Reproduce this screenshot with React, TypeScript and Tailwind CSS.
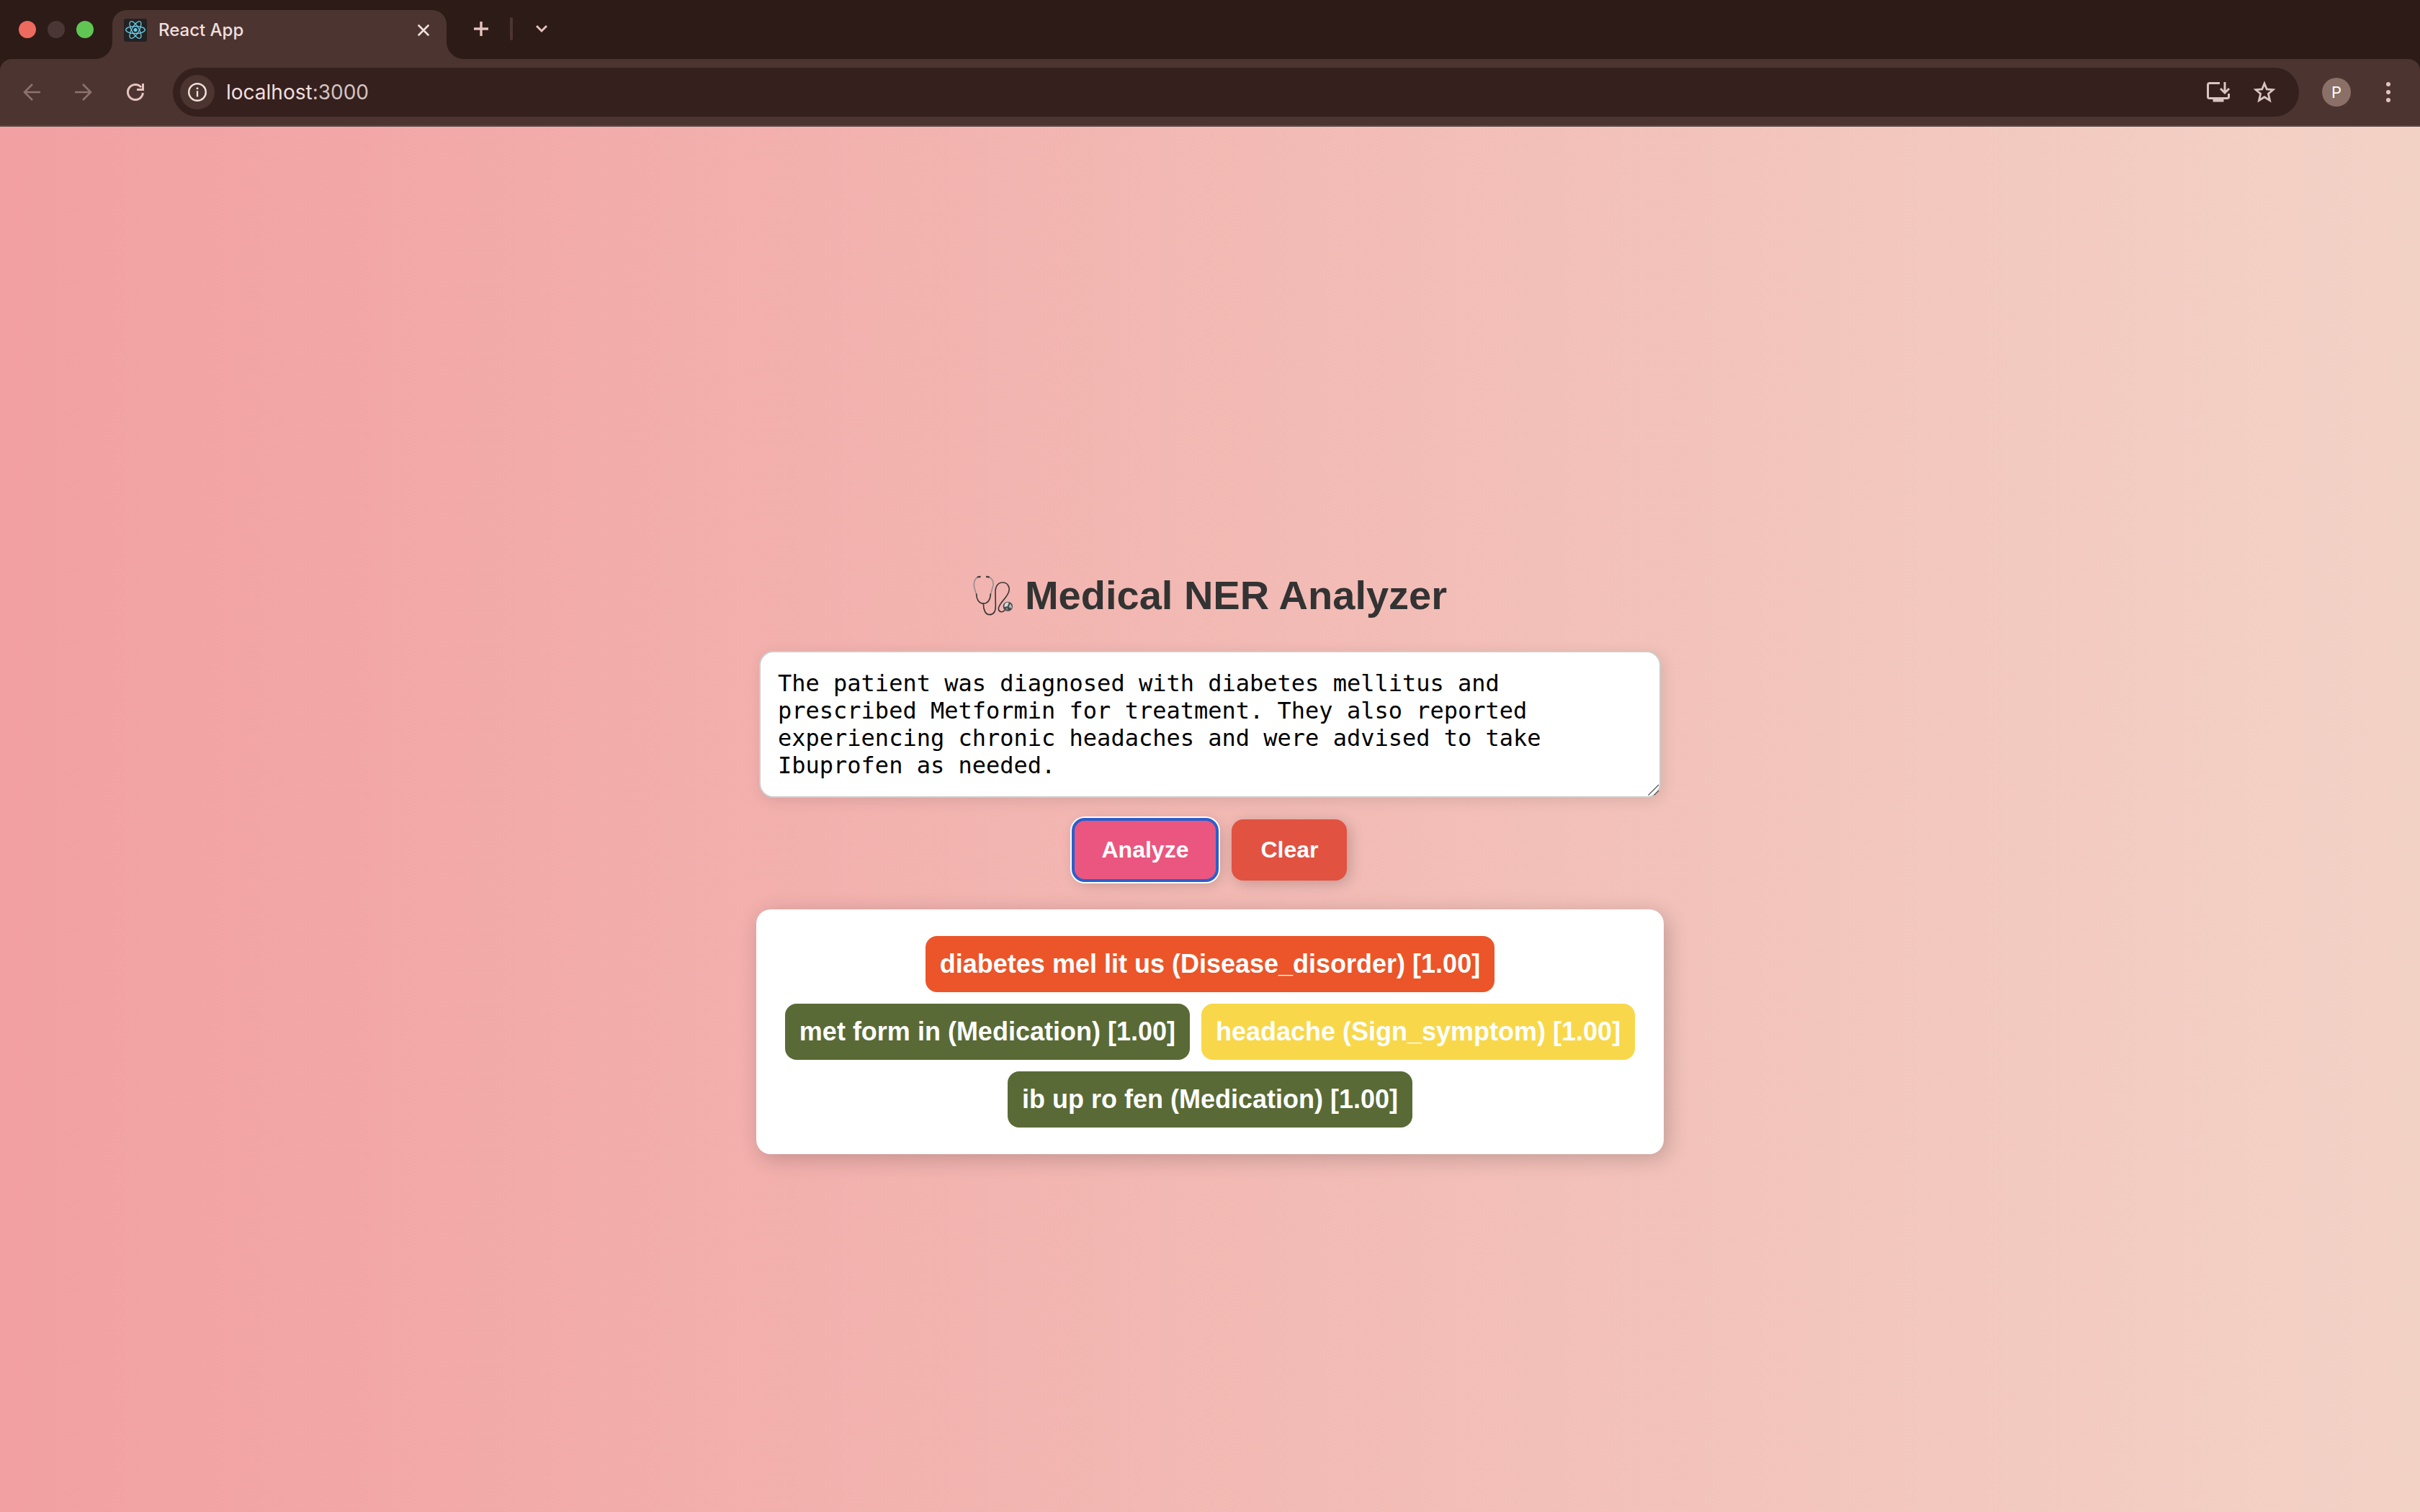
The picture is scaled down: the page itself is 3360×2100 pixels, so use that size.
import { useState } from "react";

const SAMPLE_TEXT =
  "The patient was diagnosed with diabetes mellitus and prescribed Metformin for treatment. They also reported experiencing chronic headaches and were advised to take Ibuprofen as needed.";

const ENTITIES = [
  { word: "diabetes mel lit us", group: "Disease_disorder", score: "1.00", color: "bg-[#eb5529]" },
  { word: "met form in", group: "Medication", score: "1.00", color: "bg-[#596a36]" },
  { word: "headache", group: "Sign_symptom", score: "1.00", color: "bg-[#f8d84a]" },
  { word: "ib up ro fen", group: "Medication", score: "1.00", color: "bg-[#596a36]" },
];

function ReactLogo() {
  return (
    <svg className="size-8 shrink-0" viewBox="0 0 32 32" fill="none" aria-hidden="true">
      <rect width="32" height="32" rx="3" fill="#222222" />
      <g stroke="#6fcbe6" strokeWidth="1.3">
        <ellipse cx="16" cy="15.5" rx="13.3" ry="5" />
        <ellipse cx="16" cy="15.5" rx="13.3" ry="5" transform="rotate(60 16 15.5)" />
        <ellipse cx="16" cy="15.5" rx="13.3" ry="5" transform="rotate(120 16 15.5)" />
      </g>
      <circle cx="16" cy="15.5" r="2.5" fill="#6fcbe6" />
    </svg>
  );
}

function Stethoscope() {
  return (
    <svg className="size-14 shrink-0" viewBox="64 52 168 168" fill="none" strokeLinecap="round" aria-hidden="true">
      <g stroke="#9a8c93" strokeWidth="5">
        <path d="M84 60C68 66 64 92 72 112L78 132" />
        <path d="M130 60C148 66 152 86 145 104L137 132" />
      </g>
      <g stroke="#4a3f40" strokeWidth="7">
        <path d="M84 59L93 58" />
        <path d="M121 58L130 59" />
      </g>
      <g stroke="#3f3a39" strokeWidth="5">
        <path d="M78 130C78 152 88 169 107 170C127 169 136 152 137 130" />
        <path d="M107 170C107 196 116 216 132 216C150 216 158 202 158 180L157 124C156 98 168 82 187 82C208 82 217 100 214 116C210 144 170 168 170 192C171 206 188 208 195 198" />
      </g>
      <circle cx="209" cy="182" r="20" fill="#4b4c4e" />
      <path d="M196 172C200 166 208 164 213 167L207 182L194 184Z" fill="#d5dadd" />
      <path d="M218 171C225 175 227 184 224 190L213 184Z" fill="#b9bfc3" />
      <path d="M201 190L208 188L207 198C203 197 201 194 201 190Z" fill="#8f9598" />
    </svg>
  );
}

function TabStrip() {
  return (
    <div className="flex h-[82px] items-end bg-[#2d1b18]">
      <div className="flex h-[82px] w-[132px] items-center gap-4 pl-[26px]">
        <button aria-label="Close window" className="size-6 rounded-full bg-[#ed6a5e]" />
        <button aria-label="Minimize window" className="size-6 rounded-full bg-[#4a3735]" />
        <button aria-label="Zoom window" className="size-6 rounded-full bg-[#61c554]" />
      </div>
      <div className="size-6 bg-[#4c3431]">
        <div className="size-6 rounded-br-[24px] bg-[#2d1b18]" />
      </div>
      <div className="flex h-[68px] w-[464px] items-start rounded-t-[20px] bg-[#4c3431] pt-3 pr-6 pl-4">
        <ReactLogo />
        <span className="ml-4 flex-1 text-[24px] leading-8 font-medium text-[#f1dfdc]">React App</span>
        <button aria-label="Close tab" className="flex h-8 w-4 items-center">
          <svg className="size-4" viewBox="0 0 16 16" fill="none" stroke="#f1dfdc" strokeWidth="2.6" strokeLinecap="round" aria-hidden="true">
            <path d="M1.5 1.5L14.5 14.5M14.5 1.5L1.5 14.5" />
          </svg>
        </button>
      </div>
      <div className="size-6 bg-[#4c3431]">
        <div className="size-6 rounded-bl-[24px] bg-[#2d1b18]" />
      </div>
      <div className="flex h-[82px] items-center pb-[2px] pl-[14px]">
        <button aria-label="New tab">
          <svg className="size-5" viewBox="0 0 20 20" stroke="#e5c3be" strokeWidth="3.4" aria-hidden="true">
            <path d="M0 10H20M10 0V20" />
          </svg>
        </button>
        <div className="ml-[30px] h-8 w-1 rounded-full bg-[#4c3431]" />
        <button aria-label="Search tabs" className="ml-8">
          <svg className="size-4" viewBox="0 0 16 16" fill="none" stroke="#e5c3be" strokeWidth="3" aria-hidden="true">
            <path d="M1 4L8 11L15 4" />
          </svg>
        </button>
      </div>
    </div>
  );
}

function Toolbar() {
  return (
    <div className="bg-[#2d1b18]">
      <div className="flex h-[94px] items-center rounded-t-[16px] border-b-2 border-[#5a4a47] bg-[#4c3431] pr-9">
        <div className="flex w-[240px] items-center gap-12 pl-8">
          <button aria-label="Back">
            <svg className="size-6" viewBox="0 0 24 24" fill="none" stroke="#8d7370" strokeWidth="2.6" aria-hidden="true">
              <path d="M24 12H2M13 1L2 12L13 23" />
            </svg>
          </button>
          <button aria-label="Forward">
            <svg className="size-6" viewBox="0 0 24 24" fill="none" stroke="#8d7370" strokeWidth="2.6" aria-hidden="true">
              <path d="M0 12H22M11 1L22 12L11 23" />
            </svg>
          </button>
          <button aria-label="Reload">
            <svg className="size-6" viewBox="0 0 24 24" fill="none" stroke="#e5c3be" strokeWidth="3" aria-hidden="true">
              <path d="M22.4 13A10.5 10.5 0 1 1 20 5.3" />
              <path d="M22.5 0V8.5H14" />
            </svg>
          </button>
        </div>
        <div className="flex h-[68px] flex-1 items-center rounded-full bg-[#35201e] pr-8 pl-[10px]">
          <button aria-label="View site information" className="flex size-12 items-center justify-center rounded-full bg-[#4c3431]">
            <svg className="size-[26px]" viewBox="0 0 26 26" fill="none" aria-hidden="true">
              <circle cx="13" cy="13" r="11.8" stroke="#f1dfdc" strokeWidth="2.4" />
              <circle cx="13" cy="7.8" r="1.5" fill="#f1dfdc" />
              <path d="M13 11.2V19.4" stroke="#f1dfdc" strokeWidth="2.4" />
            </svg>
          </button>
          <span className="ml-4 flex-1 text-[28px] leading-9 text-[#f1dfdc]">
            localhost<span className="text-[#d3c4c1]">:3000</span>
          </span>
          <button aria-label="Install app">
            <svg className="size-8" viewBox="0 0 32 32" fill="none" stroke="#d8c5c2" strokeWidth="3" aria-hidden="true">
              <path d="M18 3.5H4Q1.5 3.5 1.5 6V22.500Q1.500 24.500 4 24.500H28Q30.500 24.500 30.500 22.500V18" />
              <path d="M10 26.500H22V28H10Z" />
              <path d="M25 2V16M19 11L25 17L31 11" />
            </svg>
          </button>
          <button aria-label="Bookmark this tab" className="ml-8">
            <svg className="size-8" viewBox="0 0 32 32" fill="none" stroke="#d8c5c2" strokeWidth="2.8" aria-hidden="true">
              <path d="M16 4L19.300 12L28 12.700L21.400 18.300L23.500 27.500L16 22.700L8.500 27.500L10.600 18.300L4 12.700L12.700 12Z" />
            </svg>
          </button>
        </div>
        <button aria-label="Profile" className="ml-8 flex size-10 items-center justify-center rounded-full bg-[#8a7066] text-[22px] text-white">
          P
        </button>
        <button aria-label="More" className="ml-11 flex w-4 flex-col items-center gap-[5px]">
          <span className="size-[6px] rounded-full bg-[#e5c3be]" />
          <span className="size-[6px] rounded-full bg-[#e5c3be]" />
          <span className="size-[6px] rounded-full bg-[#e5c3be]" />
        </button>
      </div>
    </div>
  );
}

export default function App() {
  const [text, setText] = useState(SAMPLE_TEXT);

  return (
    <div className="flex min-h-screen flex-col">
      <header className="font-[Inter,sans-serif]">
        <TabStrip />
        <Toolbar />
      </header>
      <main className="flex flex-1 flex-col items-center justify-center bg-linear-to-r/srgb from-[#f2a0a1] to-[#f3d2c6] pt-[122px] font-['Liberation_Sans',Arial,sans-serif]">
        <h1 className="flex items-center gap-4 text-[56px] leading-[64px] font-bold text-[#333333]">
          <Stethoscope />
          Medical NER Analyzer
        </h1>
        <div className="relative mt-[45px] w-full max-w-[1252px]">
          <textarea
            aria-label="Clinical text"
            rows={4}
            value={text}
            onChange={(e) => setText(e.target.value)}
            className="block w-full resize-none overflow-hidden rounded-[20px] border-2 border-[#cccccc] bg-white p-6 font-['DejaVu_Sans_Mono',monospace] text-[32px] leading-[38px] text-black shadow-[4px_4px_20px_rgba(0,0,0,0.1)] outline-none"
          />
          <svg className="absolute right-[2px] bottom-[3px] size-4" viewBox="0 0 16 16" stroke="#555555" strokeWidth="1.3" aria-hidden="true">
            <path d="M0.500 15.500L15 1M8.500 15.500L15 9" />
          </svg>
        </div>
        <div className="mt-[30px] flex gap-5 text-[32px] leading-[37px] font-bold text-white">
          <button className="rounded-[16px] bg-[#ea567f] px-10 py-6 shadow-[4px_4px_20px_rgba(0,0,0,0.2)] ring-4 ring-white outline-4 outline-offset-[-2px] outline-[#2a5fcb]">
            Analyze
          </button>
          <button
            onClick={() => setText("")}
            className="rounded-[16px] bg-[#e15241] px-10 py-6 shadow-[4px_4px_20px_rgba(0,0,0,0.2)]"
          >
            Clear
          </button>
        </div>
        <ul className="mt-10 flex w-full max-w-[1260px] flex-wrap justify-center gap-4 rounded-[20px] bg-white px-[30px] py-[37px] text-[36px] leading-[38px] font-bold text-white shadow-[6px_6px_30px_rgba(0,0,0,0.2)]">
          {ENTITIES.map((e) => (
            <li key={e.word} className={`rounded-[16px] px-5 py-5 ${e.color}`}>
              {e.word} ({e.group}) [{e.score}]
            </li>
          ))}
        </ul>
      </main>
    </div>
  );
}
